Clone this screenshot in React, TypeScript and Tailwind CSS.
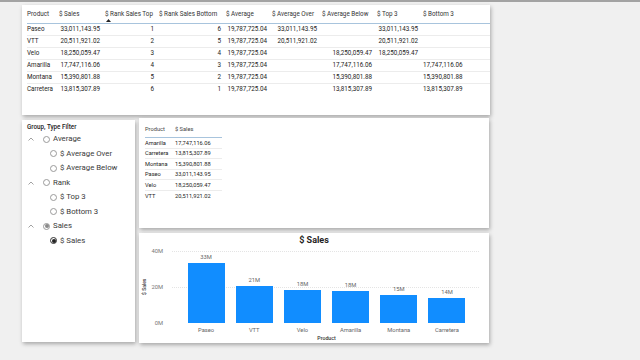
import React from "react";

const cols = ["Product", "$ Sales", "$ Rank Sales Top", "$ Rank Sales Bottom", "$ Average", "$ Average Over", "$ Average Below", "$ Top 3", "$ Bottom 3"];

const rows = [
	["Paseo", "33,011,143.95", "1", "6", "19,787,725.04", "33,011,143.95", "", "33,011,143.95", ""],
	["VTT", "20,511,921.02", "2", "5", "19,787,725.04", "20,511,921.02", "", "20,511,921.02", ""],
	["Velo", "18,250,059.47", "3", "4", "19,787,725.04", "", "18,250,059.47", "18,250,059.47", ""],
	["Amarilla", "17,747,116.06", "4", "3", "19,787,725.04", "", "17,747,116.06", "", "17,747,116.06"],
	["Montana", "15,390,801.88", "5", "2", "19,787,725.04", "", "15,390,801.88", "", "15,390,801.88"],
	["Carretera", "13,815,307.89", "6", "1", "19,787,725.04", "", "13,815,307.89", "", "13,815,307.89"],
];

const sorted = [
	["Amarilla", "17,747,116.06"],
	["Carretera", "13,815,307.89"],
	["Montana", "15,390,801.88"],
	["Paseo", "33,011,143.95"],
	["Velo", "18,250,059.47"],
	["VTT", "20,511,921.02"],
];

const bars = [
	{ name: "Paseo", value: 33.01, label: "33M" },
	{ name: "VTT", value: 20.51, label: "21M" },
	{ name: "Velo", value: 18.25, label: "18M" },
	{ name: "Amarilla", value: 17.75, label: "18M" },
	{ name: "Montana", value: 15.39, label: "15M" },
	{ name: "Carretera", value: 13.82, label: "14M" },
];

const grid = "grid grid-cols-[32px_46px_54px_67px_46px_50px_55px_46px_43px]";

function Chevron() {
	return (
		<svg width="6" height="4" viewBox="0 0 6 4" className="text-[#8a8a8a]">
			<path d="M0.5 3.5 L3 1 L5.5 3.5" fill="none" stroke="currentColor" strokeWidth="0.8" />
		</svg>
	);
}

function Radio({ state }: { state: "off" | "part" | "on" }) {
	return (
		<span
			className={
				"flex items-center justify-center size-[7px] rounded-full border " +
				(state === "on" ? "border-[#333]" : "border-[#9a9a9a]")
			}
		>
			{state === "on" && <span className="size-[4px] rounded-full bg-[#222]" />}
			{state === "part" && <span className="size-[4px] rounded-full bg-[#8a8a8a]" />}
		</span>
	);
}

function Group({ label, state }: { label: string; state: "off" | "part" | "on" }) {
	return (
		<div className="flex items-center h-[14.5px] pl-[6px]">
			<div className="w-[15px] flex items-center"><Chevron /></div>
			<Radio state={state} />
			<span className="ml-[3px]">{label}</span>
		</div>
	);
}

function Item({ label, state }: { label: string; state: "off" | "on" }) {
	return (
		<div className="flex items-center h-[14.5px] pl-[28px]">
			<Radio state={state} />
			<span className="ml-[3px]">{label}</span>
		</div>
	);
}

export default function App() {
	return (
		<div className="w-[640px] h-[360px] overflow-hidden bg-[#f0f0f0] border-t-2 border-[#a3a3a3] pl-[22px] pt-[3px] font-['Roboto',sans-serif] text-[#252423]">
			{/* main table */}
			<div className="w-[468px] h-[110px] bg-white shadow-[1px_2px_4px_rgba(0,0,0,0.3)] pl-[5px] pt-[2px] text-[6.3px]">
				<div className={grid + " h-[17px] border-b border-[#a8c4dd] items-center text-[#333]"}>
					{cols.map((c, i) => (
						<div key={c} className="relative whitespace-nowrap">
							{c}
							{i === 2 && (
								<svg width="5" height="3" viewBox="0 0 5 3" className="absolute left-[1px] top-[9px]">
									<path d="M0 3 L2.5 0 L5 3 Z" fill="#222" />
								</svg>
							)}
						</div>
					))}
				</div>
				{rows.map((r, ri) => (
					<div
						key={r[0]}
						className={grid + " h-[12px] items-center " + (ri < rows.length - 1 ? "border-b border-[#ececec]" : "")}
					>
						{r.map((v, i) => (
							<div key={i} className={i === 0 ? "whitespace-nowrap" : "text-right pr-[5px] whitespace-nowrap"}>
								{v}
							</div>
						))}
					</div>
				))}
			</div>

			<div className="flex items-start gap-[4px] mt-[3px]">
				{/* filter */}
				<div className="w-[113px] h-[222px] mt-[2px] bg-white shadow-[1px_2px_4px_rgba(0,0,0,0.3)] pt-[3px] text-[7.8px] text-[#3a3a3a]">
					<div className="pl-[5px] h-[9px] text-[6.3px] font-medium text-[#252423] flex items-center">Group, Type Filter</div>
					<Group label="Average" state="off" />
					<Item label="$ Average Over" state="off" />
					<Item label="$ Average Below" state="off" />
					<Group label="Rank" state="off" />
					<Item label="$ Top 3" state="off" />
					<Item label="$ Bottom 3" state="off" />
					<Group label="Sales" state="part" />
					<Item label="$ Sales" state="on" />
				</div>

				<div className="flex flex-col gap-[5px]">
					{/* small table */}
					<div className="w-[350px] h-[110px] bg-white shadow-[1px_2px_4px_rgba(0,0,0,0.3)] pl-[6px] pt-[4px] text-[5.7px]">
						<div className="w-[77px]">
							<div className="grid grid-cols-[30px_47px] h-[16px] items-center border-b border-[#a8c4dd] text-[#444]">
								<div>Product</div>
								<div>$ Sales</div>
							</div>
							{sorted.map((r, i) => (
								<div
									key={r[0]}
									className={"grid grid-cols-[30px_47px] h-[10.6px] items-center " + (i < sorted.length - 1 ? "border-b border-[#ececec]" : "")}
								>
									<div className="whitespace-nowrap">{r[0]}</div>
									<div className="whitespace-nowrap">{r[1]}</div>
								</div>
							))}
						</div>
					</div>

					{/* chart */}
					<div className="w-[350px] h-[110px] bg-white shadow-[1px_2px_4px_rgba(0,0,0,0.3)] flex flex-col">
						<div className="h-[15px] pt-[1px] flex items-center justify-center text-[9px] font-bold text-[#252423]">$ Sales</div>
						<div className="flex pr-[10px] -mt-[1px]">
							<div className="w-[12px] h-[80px] flex items-center justify-center">
								<span className="-rotate-90 whitespace-nowrap text-[5px] font-medium text-[#444]">$ Sales</span>
							</div>
							<div className="w-[18px] h-[80px] flex flex-col justify-between items-end pr-[6px] text-[5.8px] text-[#777]">
								<span className="h-[8px] leading-[8px]">40M</span>
								<span className="h-[8px] leading-[8px]">20M</span>
								<span className="h-[8px] leading-[8px]">0M</span>
							</div>
							<div className="flex-1 flex flex-col">
								<div className="relative h-[80px]">
									<div className="absolute left-[3px] right-0 top-[4px] border-t border-dotted border-[#e4e4e4]" />
									<div className="absolute left-[3px] right-0 top-[40px] border-t border-dotted border-[#e4e4e4]" />
									<div className="relative h-full flex items-end pl-[13px] pr-[8px] pb-[4px]">
										{bars.map((b) => (
											<div key={b.name} className="flex-1 flex flex-col items-center justify-end">
												<span className="text-[5.8px] text-[#666] leading-[7px] mb-[2px]">{b.label}</span>
												<div className="w-[37px] bg-[#118dff]" style={{ height: `${b.value * 1.8}px` }} />
											</div>
										))}
									</div>
								</div>
								<div className="flex pl-[13px] pr-[8px] -mt-[1px] h-[9px] items-center text-[5.8px] text-[#666]">
									{bars.map((b) => (
										<div key={b.name} className="flex-1 text-center">{b.name}</div>
									))}
								</div>
								<div className="flex pl-[13px] pr-[8px] justify-center h-[9px] items-center text-[5.2px] font-medium text-[#333]">
									Product
								</div>
							</div>
						</div>
					</div>
				</div>
			</div>
		</div>
	);
}
